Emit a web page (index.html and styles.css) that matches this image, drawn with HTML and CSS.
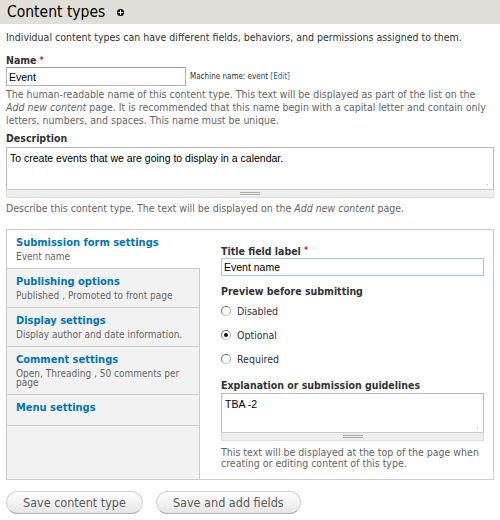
FILE: index.html
```html
<!DOCTYPE html>
<html lang="en">
<head>
    <meta charset="UTF-8">
    <title>Content types</title>
    <link rel="stylesheet" href="styles.css">
</head>
<body>
    <div class="page-header">
        <h1>Content types</h1>
        <span class="add-icon"></span>
    </div>
    <div class="content">
        <p class="intro">Individual content types can have different fields, behaviors, and permissions assigned to them.</p>

        <div class="form-item">
            <label class="form-label">Name <span class="required">*</span></label>
            <div class="name-row">
                <input type="text" class="form-text name-input" value="Event">
                <span class="machine-name">Machine name: event <a href="#">[Edit]</a></span>
            </div>
            <div class="description name-help">The human-readable name of this content type. This text will be displayed as part of the list on the <em>Add new content</em> page. It is recommended that this name begin with a capital letter and contain only letters, numbers, and spaces. This name must be unique.</div>
        </div>

        <div class="form-item">
            <label class="form-label desc-label">Description</label>
            <div class="textarea big">To create events that we are going to display in a calendar.<span class="resizer"></span></div>
            <div class="grippie"></div>
            <div class="description desc-help">Describe this content type. The text will be displayed on the <em>Add new content</em> page.</div>
        </div>

        <div class="vtabs">
            <ul class="vtabs-list">
                <li class="selected">
                    <a href="#">Submission form settings</a>
                    <span class="summary">Event name</span>
                </li>
                <li>
                    <a href="#">Publishing options</a>
                    <span class="summary">Published , Promoted to front page</span>
                </li>
                <li>
                    <a href="#">Display settings</a>
                    <span class="summary">Display author and date information.</span>
                </li>
                <li>
                    <a href="#">Comment settings</a>
                    <span class="summary">Open, Threading , 50 comments per page</span>
                </li>
                <li class="no-summary">
                    <a href="#">Menu settings</a>
                </li>
            </ul>
            <div class="vtabs-pane">
                <label class="form-label">Title field label <span class="required">*</span></label>
                <input type="text" class="form-text title-input" value="Event name">

                <label class="form-label preview-label">Preview before submitting</label>
                <div class="radios">
                    <label class="radio"><span class="radio-dot"></span>Disabled</label>
                    <label class="radio"><span class="radio-dot checked"></span>Optional</label>
                    <label class="radio"><span class="radio-dot"></span>Required</label>
                </div>

                <label class="form-label help-label">Explanation or submission guidelines</label>
                <div class="textarea small">TBA -2<span class="resizer"></span></div>
                <div class="grippie"></div>
                <div class="description pane-help">This text will be displayed at the top of the page when creating or editing content of this type.</div>
            </div>
        </div>

        <div class="actions">
            <button class="button">Save content type</button>
            <button class="button">Save and add fields</button>
        </div>
    </div>
</body>
</html>
```

FILE: styles.css
```css
body {
    margin: 0;
    background-color: #fff;
    font-family: "DejaVu Sans Condensed", "DejaVu Sans", sans-serif;
    font-stretch: condensed;
    font-size: 10.5px;
    line-height: 13px;
    color: #333;
}
a {
    color: #0074bd;
    text-decoration: none;
}
.page-header {
    height: 24px;
    background-color: #e0e0d8;
    display: flex;
    align-items: center;
    padding: 0 7px;
}
.page-header h1 {
    margin: 0;
    font-size: 15.5px;
    font-weight: normal;
    color: #000;
    line-height: 20px;
}
.add-icon {
    position: relative;
    width: 7px;
    height: 7px;
    border-radius: 50%;
    background-color: #000;
    margin-left: 12px;
}
.add-icon::before,
.add-icon::after {
    content: "";
    position: absolute;
    background-color: #fff;
}
.add-icon::before {
    left: 3px;
    top: 1px;
    width: 1px;
    height: 5px;
}
.add-icon::after {
    left: 1px;
    top: 3px;
    width: 5px;
    height: 1px;
}
.content {
    padding: 0 6px;
}
.intro {
    margin: 7px 0 10px;
}
.form-label {
    display: block;
    font-weight: bold;
    color: #333;
}
.required {
    color: #e00;
    font-size: 8px;
    vertical-align: top;
}
.name-row {
    display: flex;
    align-items: center;
}
.form-text {
    box-sizing: border-box;
    font-family: "Liberation Sans", Arial, sans-serif;
    font-size: 10.5px;
    color: #000;
    padding: 1px 2px;
    border: 1px solid #b4b4b4;
    border-top-color: #999;
    outline: none;
}
.name-input {
    width: 180px;
    height: 19px;
}
.machine-name {
    font-size: 8px;
    margin-left: 4px;
    line-height: 10px;
}
.description {
    color: #666;
}
.description em {
    display: inline-block;
    line-height: 13px;
    height: 13px;
    vertical-align: top;
}
.name-help {
    margin-top: 2px;
}
.desc-label {
    margin-top: 5px;
    margin-bottom: 2px;
}
.textarea {
    position: relative;
    box-sizing: border-box;
    font-family: "Liberation Sans", Arial, sans-serif;
    font-size: 10.5px;
    color: #000;
    border: 1px solid #bbb;
    border-bottom: none;
    padding: 4px 3px;
}
.textarea.big {
    height: 42px;
}
.textarea.small {
    height: 39px;
}
.resizer {
    position: absolute;
    right: 3px;
    bottom: 2px;
    width: 7px;
    height: 7px;
    background-image: radial-gradient(circle, #bbb 0.8px, transparent 1px);
    background-size: 3px 3px;
    clip-path: polygon(100% 0, 100% 100%, 0 100%);
}
.grippie {
    box-sizing: border-box;
    height: 9px;
    background-color: #eee;
    border: 1px solid #ddd;
    border-top-color: #ccc;
    position: relative;
}
.grippie::after {
    content: "";
    position: absolute;
    left: 50%;
    top: 2px;
    width: 20px;
    margin-left: -10px;
    height: 1px;
    border-top: 1px solid #aaa;
    border-bottom: 1px solid #aaa;
}
.desc-help {
    margin-top: 4px;
}
.vtabs {
    display: flex;
    margin-top: 14px;
    border: 1px solid #ccc;
}
.vtabs-list {
    list-style: none;
    margin: 0;
    padding: 0;
    width: 192px;
    background-color: #f2f2f2;
    border-right: 1px solid #ccc;
}
.vtabs-list li {
    padding: 6px 9px 7px;
    border-bottom: 1px solid #ccc;
}
.vtabs-list li.selected {
    background-color: #fff;
    margin-right: -1px;
    padding-right: 10px;
}
.vtabs-list li.no-summary {
    padding-bottom: 10px;
}
.vtabs-list a {
    display: block;
    font-size: 11px;
    font-weight: bold;
    line-height: 14px;
}
.summary {
    display: block;
    margin-top: 2px;
    font-size: 10px;
    line-height: 9px;
    color: #666;
}
.vtabs-pane {
    flex: 1;
    padding: 14px 9px 10px 21px;
}
.vtabs-pane .form-label {
    line-height: 14px;
}
.title-input {
    display: block;
    width: 100%;
    height: 18px;
    border-color: #a6c8ea;
}
.preview-label {
    margin-top: 8px;
}
.radios {
    margin-top: 1px;
}
.radio {
    display: flex;
    align-items: center;
    height: 24px;
}
.radio-dot {
    box-sizing: border-box;
    width: 10px;
    height: 10px;
    border-radius: 50%;
    border: 1px solid #777;
    border-bottom-color: #bbb;
    border-right-color: #aaa;
    background-color: #fff;
    margin-right: 6px;
    display: flex;
    align-items: center;
    justify-content: center;
}
.radio-dot.checked::after {
    content: "";
    width: 4px;
    height: 4px;
    border-radius: 50%;
    background-color: #111;
}
.help-label {
    margin-top: 7px;
    margin-bottom: 1px;
}
.pane-help {
    margin-top: 6px;
    line-height: 11px;
}
.actions {
    display: flex;
    gap: 13px;
    margin-top: 11px;
}
.button {
    font-family: "DejaVu Sans Condensed", "DejaVu Sans", sans-serif;
    font-stretch: condensed;
    font-size: 12.5px;
    color: #5a5a5a;
    height: 23px;
    padding: 0 16px;
    border: 1px solid #d4d4d4;
    border-bottom-color: #b4b4b4;
    border-radius: 12px;
    background: linear-gradient(#fefefe, #e6e6e6);
    cursor: pointer;
}
```
